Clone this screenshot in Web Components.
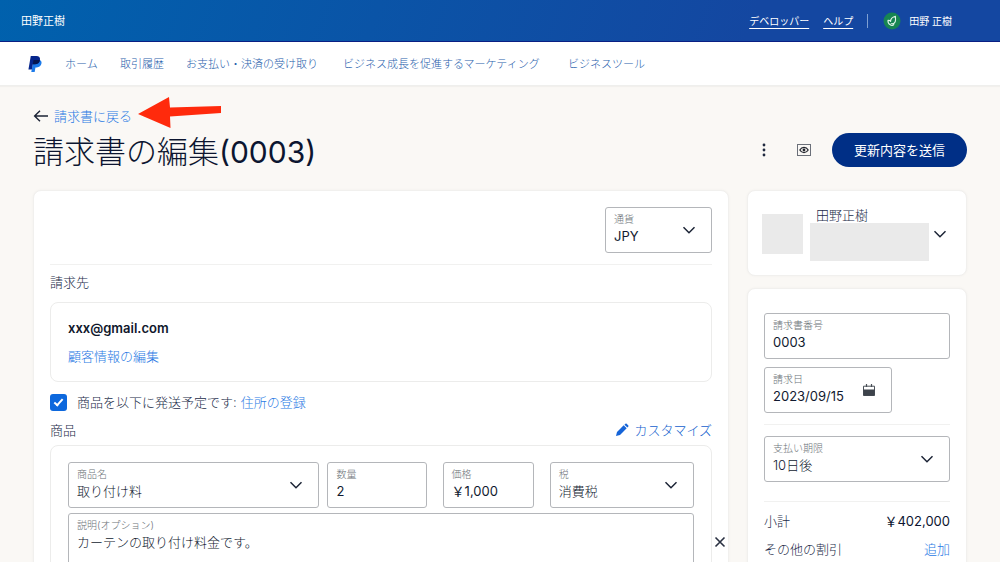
<!DOCTYPE html>
<html lang="ja">
<head>
<meta charset="utf-8">
<meta name="viewport" content="width=device-width, initial-scale=1">
<title>請求書の編集</title>
<style>
  html { background: #faf8f5; }
  body { margin: 0; color: #232c49; font: 13px/20px Inter, "Noto Sans CJK JP", sans-serif; }
</style>
</head>
<body>
<invoice-app></invoice-app>

<script>
const base = `
  *, *::before { box-sizing: border-box; }
  a { color: #2a7ae4; text-decoration: none; font-weight: 300; }
  h1, h2, p { margin: 0; font: inherit; }
  button, input, select, textarea { font: inherit; color: inherit; margin: 0; padding: 0; border: 0; background: none; }
  svg { display: block; flex: none; }
`;
function define(name, html, setup) {
  const template = document.createElement('template');
  template.innerHTML = `<style>${base}</style>` + html;
  customElements.define(name, class extends HTMLElement {
    connectedCallback() {
      if (this.shadowRoot) return;
      const root = this.attachShadow({ mode: 'open' });
      root.append(template.content.cloneNode(true));
      if (setup) setup(this, root);
    }
  });
}

const icons = {
  chevron: ['0 0 14 14', 14, '<path d="M1.5 4.3 7 9.7l5.5-5.4" fill="none" stroke="#1b2335" stroke-width="1.5"/>'],
  back: ['0 0 16 14', 16, '<path d="M15 7H1.800M7 1.800 1.600 7 7 12.200" fill="none" stroke="#1b2335" stroke-width="1.400"/>'],
  calendar: ['0 0 14 14', 14, '<path d="M1.500 3.200h11v9.300h-11z" fill="none" stroke="#4a5058" stroke-width="1"/><path d="M1.500 6.500h11v6h-11z" fill="#3d434b"/><path d="M4.500 1v3M9.500 1v3" stroke="#4a5058" stroke-width="1.200"/>'],
  kebab: ['0 0 14 14', 14, '<g fill="#20293f"><circle cx="7" cy="2" r="1.400"/><circle cx="7" cy="7" r="1.400"/><circle cx="7" cy="12" r="1.400"/></g>'],
  preview: ['0 0 16 14', 16, '<rect x="1.500" y="1.500" width="13" height="11" fill="none" stroke="#6b7079"/><path d="M3.800 7c2.100-3.500 6.300-3.500 8.400 0-2.100 3.500-6.300 3.500-8.400 0z" fill="none" stroke="#20242c" stroke-width="1.200"/><circle cx="8" cy="7" r="1.400" fill="#20242c"/>'],
  pencil: ['0 0 14 14', 14, '<path d="M1 13l1-4 6.700-6.700 3 3L5 12z" fill="#1564d8"/><path d="M9.400 1.700l.9-.8c.5-.5 1-.4 1.500 0l1.400 1.400c.4.500.4 1 0 1.500l-.8.800z" fill="#1564d8"/>'],
  close: ['0 0 12 12', 12, '<path d="M1.500 1.500l9 9M10.500 1.500l-9 9" stroke="#2a3142" stroke-width="1.600"/>'],
  paypal: ['0 0 24 28', 14, '<path d="M9.500 7h9.300c3.400 0 5.200 2.500 4.600 5.800-.8 4.800-3.900 7.200-8.400 7.200h-2.200L11.400 28H5.500z" fill="#1c7bea"/><path d="M4.600 0h9.900c4.400 0 7 2.800 6.200 7-.9 5-4.200 7.300-9 7.300H8.200L6.500 23.500H.5z" fill="#06268c"/><path d="M9.500 7h9.300l1.900.300c-.9 4.700-4.200 7-9 7H8.200z" fill="#061650"/>'],
  leaf: ['0 0 18 18', 18, '<circle cx="9" cy="9" r="8.500" fill="#178552"/><path d="M5 8.300c-.2 2 .5 3.600 2.300 4.500M5 8.300c1.300-.1 2 .3 2.600 1.200C7.500 7.300 9.500 5 12.400 4.200c-.1 1.800.6 3.500-.2 5.600-.6 1.600-2.200 2.300-4 1.900M7.300 12.800c1 .9 2.700.9 3.500-.2" fill="none" stroke="#e2f4ea" stroke-width="1.100" stroke-linecap="round" stroke-linejoin="round"/>']
};
define('ui-icon', `<style>:host { display: block; flex: none; }</style>`, (el, root) => {
  const [box, width, body] = icons[el.getAttribute('name')];
  const [, , w, h] = box.split(' ').map(Number);
  const holder = document.createElement('template');
  holder.innerHTML = `<svg viewBox="${box}" width="${width}" height="${Math.round(width * h / w)}" aria-hidden="true">${body}</svg>`;
  root.append(holder.content);
});

define('form-field', `
  <style>
    :host { display: block; min-width: 0; }
    .box { position: relative; display: grid; grid-template-columns: minmax(0, 1fr); padding: 4px 8px 6px; border: 1px solid #b4b6ba; border-radius: 3px; background: #fff; }
    label { font-size: 10px; line-height: 14px; font-weight: 300; color: #6c7378; }
    input, select, textarea { display: block; width: 100%; height: 20px; line-height: 20px; appearance: none; outline: 0; resize: none; color: #111a30; font-weight: 400; border-radius: 0; }
    .cjk { font-weight: 300; }
    textarea { height: 74px; }
    ui-icon { position: absolute; right: 15px; top: 15px; pointer-events: none; }
  </style>
  <div class="box"><label for="control"></label></div>`, (el, root) => {
  const kind = el.getAttribute('kind') || 'input';
  const value = el.getAttribute('value');
  const control = document.createElement(kind);
  control.id = 'control';
  root.querySelector('label').textContent = el.getAttribute('label');
  if (kind === 'select') control.append(new Option(value));
  else control.value = value;
  if (/[\u3040-\u9fff]/.test(value)) control.className = 'cjk';
  root.querySelector('.box').append(control);
  const name = el.getAttribute('icon') || (kind === 'select' ? 'chevron' : '');
  if (name) {
    const icon = document.createElement('ui-icon');
    icon.setAttribute('name', name);
    root.querySelector('.box').append(icon);
  }
});

define('ui-card', `
  <style>:host { display: block; padding: 16px; background: #fff; border: 1px solid #f1f0ee; border-radius: 8px; box-shadow: 0 0 3px #0000000a; }</style>
  <slot></slot>`);

define('account-bar', `
  <style>
    :host { display: flex; align-items: center; justify-content: space-between; height: 42px; padding: 0 48px 0 21px; color: #fff; font-size: 11px; background: linear-gradient(110deg, #0061ad, #1447a1 75%); border-bottom: 1px solid #0a1f83; }
    .right { display: flex; align-items: center; font-size: 10px; gap: 14px; }
    a { color: #fff; font-weight: 400; text-decoration: underline; text-underline-offset: 3px; }
    .user { display: flex; align-items: center; gap: 8px; padding-left: 15px; border-left: 1px solid #7fa0d2; height: 14px; }
  </style>
  <span>田野正樹</span>
  <div class="right"><a href="#">デベロッパー</a><a href="#">ヘルプ</a>
    <span class="user"><ui-icon name="leaf"></ui-icon>田野 正樹</span></div>`);

define('main-nav', `
  <style>
    :host { display: block; background: #fff; border-bottom: 1px solid #efefed; box-shadow: 0 1px 1px #00000008; }
    nav { display: grid; grid-template-columns: 37px 55px 66px 157px 225px auto; align-items: center; height: 43px; padding: 0 28px; white-space: nowrap; }
    a { font-size: 11px; color: #1f60ac; }
  </style>
  <nav><a href="#" aria-label="PayPal"><ui-icon name="paypal"></ui-icon></a>
    <a href="#">ホーム</a><a href="#">取引履歴</a><a href="#">お支払い・決済の受け取り</a><a href="#">ビジネス成長を促進するマーケティング</a><a href="#">ビジネスツール</a></nav>`);

define('pointer-arrow', `
  <style>:host { display: block; position: absolute; left: 104px; top: -10px; pointer-events: none; }</style>
  <svg width="86" height="34" viewBox="0 0 86 34" aria-hidden="true"><path d="M1 18 32 1l1 10.500L84 10v7L33 20.500l.5 11.500z" fill="#ff2a0c"/></svg>`);

define('page-heading', `
  <style>
    :host { display: block; }
    .back { position: relative; display: flex; align-items: center; gap: 5px; width: fit-content; }
    .row { display: flex; align-items: center; height: 48px; }
    h1 { flex: 1; padding-top: 4px; font-size: 31px; line-height: 44px; font-weight: 300; color: #0c1530; }
    h1 span { font-size: 30px; font-weight: 400; }
    .icon { display: flex; align-items: center; justify-content: center; width: 40px; height: 34px; }
    .send { height: 34px; padding: 0 22px; margin-left: 8px; border-radius: 17px; background: #002f86; color: #fff; }
  </style>
  <div class="back"><ui-icon name="back"></ui-icon><a href="#">請求書に戻る</a><pointer-arrow></pointer-arrow></div>
  <div class="row"><h1>請求書の編集<span>(0003)</span></h1>
    <button class="icon" aria-label="その他"><ui-icon name="kebab"></ui-icon></button>
    <button class="icon" aria-label="プレビュー"><ui-icon name="preview"></ui-icon></button>
    <button class="send">更新内容を送信</button></div>`);

define('line-item', `
  <style>
    :host { display: block; position: relative; padding: 16px 17px; border: 1px solid #ececeb; border-radius: 8px; }
    .fields { display: grid; grid-template-columns: 358fr 91fr 144fr; column-gap: 16px; margin-bottom: 5px; }
    .product { display: grid; grid-template-columns: 251fr 99fr; column-gap: 8px; }
    button { position: absolute; right: -15px; top: 90px; display: block; }
  </style>
  <div class="fields">
    <div class="product">
      <form-field kind="select" label="商品名" value="取り付け料"></form-field>
      <form-field label="数量" value="2"></form-field>
    </div>
    <form-field label="価格" value="&#xFFE5;1,000"></form-field>
    <form-field kind="select" label="税" value="消費税"></form-field>
  </div>
  <form-field kind="textarea" label="説明(オプション)" value="カーテンの取り付け料金です。"></form-field>
  <button aria-label="削除"><ui-icon name="close"></ui-icon></button>`);

define('invoice-form', `
  <style>
    :host { display: block; min-width: 0; font-weight: 300; }
    .currency { display: flex; justify-content: flex-end; padding-bottom: 11px; border-bottom: 1px solid #f1f1f0; }
    .currency form-field { width: 107px; }
    h2 { margin-top: 7px; }
    .customer { display: grid; gap: 8px; margin: 10px 0; padding: 15px 17px; border: 1px solid #ececeb; border-radius: 8px; }
    .customer strong { font-weight: 600; color: #0f172b; }
    .ship { display: flex; align-items: center; }
    .ship label { margin: 0 4px 0 10px; }
    input { appearance: none; width: 17px; height: 17px; border-radius: 3px; background: #0d68dd; display: grid; place-content: center; }
    input:checked::before { content: ""; width: 9px; height: 5px; border: solid #fff; border-width: 0 0 2px 2px; transform: rotate(-48deg); margin-top: -2px; }
    .items { display: flex; justify-content: space-between; margin: 8px 0 5px; }
    .items h2 { margin: 0; }
    .items a { display: flex; align-items: center; gap: 5px; color: #145fce; }
  </style>
  <ui-card>
    <div class="currency"><form-field kind="select" label="通貨" value="JPY"></form-field></div>
    <h2>請求先</h2>
    <div class="customer"><strong>xxx@gmail.com</strong><a href="#">顧客情報の編集</a></div>
    <div class="ship"><input type="checkbox" id="ship" checked><label for="ship">商品を以下に発送予定です:</label><a href="#">住所の登録</a></div>
    <div class="items"><h2>商品</h2><a href="#"><ui-icon name="pencil"></ui-icon>カスタマイズ</a></div>
    <line-item></line-item>
  </ui-card>`);

define('invoice-sidebar', `
  <style>
    :host { display: grid; gap: 12px; align-content: start; font-weight: 300; }
    .profile { display: flex; align-items: center; margin: 0 3px -2px -2px; }
    .logo { width: 41px; height: 40px; background: #eaeaea; }
    .who { flex: 1; margin: 0 4px 0 7px; }
    .name { padding-left: 6px; line-height: 16px; }
    .address { height: 38px; background: #eaeaea; }
    button { display: block; }
    .details { display: grid; gap: 8px; padding-top: 8px; }
    .date { width: 128px; }
    hr { width: 100%; border: 0; border-top: 1px solid #f1f1f0; margin: 3px 0; }
    .terms { margin-bottom: 8px; }
    dl { display: grid; grid-template-columns: 1fr auto; row-gap: 8px; margin: -2px 0 0; }
    dd { margin: 0; text-align: right; }
    .total { color: #0c1530; font-weight: 400; }
  </style>
  <ui-card><div class="profile"><div class="logo"></div><div class="who"><div class="name">田野正樹</div><div class="address"></div></div><button aria-label="展開"><ui-icon name="chevron"></ui-icon></button></div></ui-card>
  <ui-card><div class="details">
    <form-field label="請求書番号" value="0003"></form-field>
    <form-field class="date" label="請求日" value="2023/09/15" icon="calendar"></form-field>
    <hr>
    <form-field class="terms" kind="select" label="支払い期限" value="10日後"></form-field>
    <hr>
    <dl><dt>小計</dt><dd class="total">&#xFFE5;402,000</dd><dt>その他の割引</dt><dd><a href="#">追加</a></dd></dl>
  </div></ui-card>`);

define('invoice-app', `
  <style>
    :host { display: block; height: 100vh; overflow: hidden; }
    main { padding: 20px 33px 0; }
    .columns { display: grid; grid-template-columns: minmax(0, 1fr) 220px; gap: 18px; align-items: start; margin-top: 16px; }
  </style>
  <account-bar></account-bar>
  <main-nav></main-nav>
  <main>
    <page-heading></page-heading>
    <div class="columns"><invoice-form></invoice-form><invoice-sidebar></invoice-sidebar></div>
  </main>`);
</script>
</body>
</html>
